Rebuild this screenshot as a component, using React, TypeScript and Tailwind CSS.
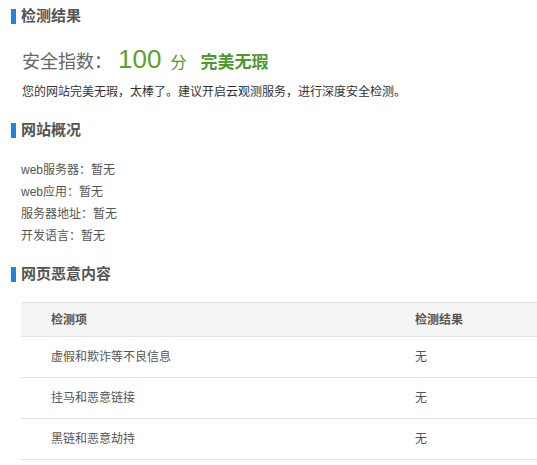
import React from 'react';

const FONT = '"Liberation Sans", "Noto Sans CJK SC", Arial, sans-serif';

const siteInfo = [
  { label: 'web服务器', value: '暂无' },
  { label: 'web应用', value: '暂无' },
  { label: '服务器地址', value: '暂无' },
  { label: '开发语言', value: '暂无' },
];

const checks = [
  { name: '虚假和欺诈等不良信息', result: '无' },
  { name: '挂马和恶意链接', result: '无' },
  { name: '黑链和恶意劫持', result: '无' },
];

const Heading: React.FC<{ title: string; className?: string }> = ({ title, className = '' }) => (
  <div className={`flex items-center h-[20px] pl-[11px] ${className}`}>
    <span className="block w-[5px] h-[15px] bg-[#2184e0]" />
    <h3 className="ml-[5px] text-[15px] leading-[20px] font-bold text-[#555]">{title}</h3>
  </div>
);

export default function App() {
  return (
    <div className="w-[537px] h-[465px] bg-white overflow-hidden" style={{ fontFamily: FONT }}>
      <Heading title="检测结果" className="mt-[6px]" />

      {/* score */}
      <div className="mt-[16px] pl-[22px] flex items-baseline h-[34px] leading-[34px]">
        <span className="text-[18px] text-[#666]">安全指数：</span>
        <span className="ml-[6px] text-[26px] text-[#5aa12f]">100</span>
        <span className="ml-[9px] text-[16px] text-[#4e992c]">分</span>
        <span className="ml-[14px] text-[17px] font-bold text-[#4e992c]">完美无瑕</span>
      </div>

      <p className="mt-[6px] pl-[22px] text-[12px] leading-[20px] text-[#333]">
        您的网站完美无瑕，太棒了。建议开启云观测服务，进行深度安全检测。
      </p>

      <Heading title="网站概况" className="mt-[18px]" />

      <ul className="mt-[19px] pl-[21px]">
        {siteInfo.map((item) => (
          <li key={item.label} className="text-[12px] leading-[22px] text-[#555]">
            {item.label}：{item.value}
          </li>
        ))}
      </ul>

      <Heading title="网页恶意内容" className="mt-[17px]" />

      <div className="mt-[18px] ml-[21px] border-t border-[#e3e3e3] text-[12px] text-[#555]">
        <div className="grid grid-cols-[364px_1fr] h-[34px] items-center bg-[#f5f5f5] border-b border-[#e3e3e3] font-bold">
          <div className="pl-[30px]">检测项</div>
          <div className="pl-[30px]">检测结果</div>
        </div>
        {checks.map((row) => (
          <div key={row.name} className="grid grid-cols-[364px_1fr] h-[41px] items-center border-b border-[#e3e3e3]">
            <div className="pl-[30px]">{row.name}</div>
            <div className="pl-[30px]">{row.result}</div>
          </div>
        ))}
      </div>
    </div>
  );
}
